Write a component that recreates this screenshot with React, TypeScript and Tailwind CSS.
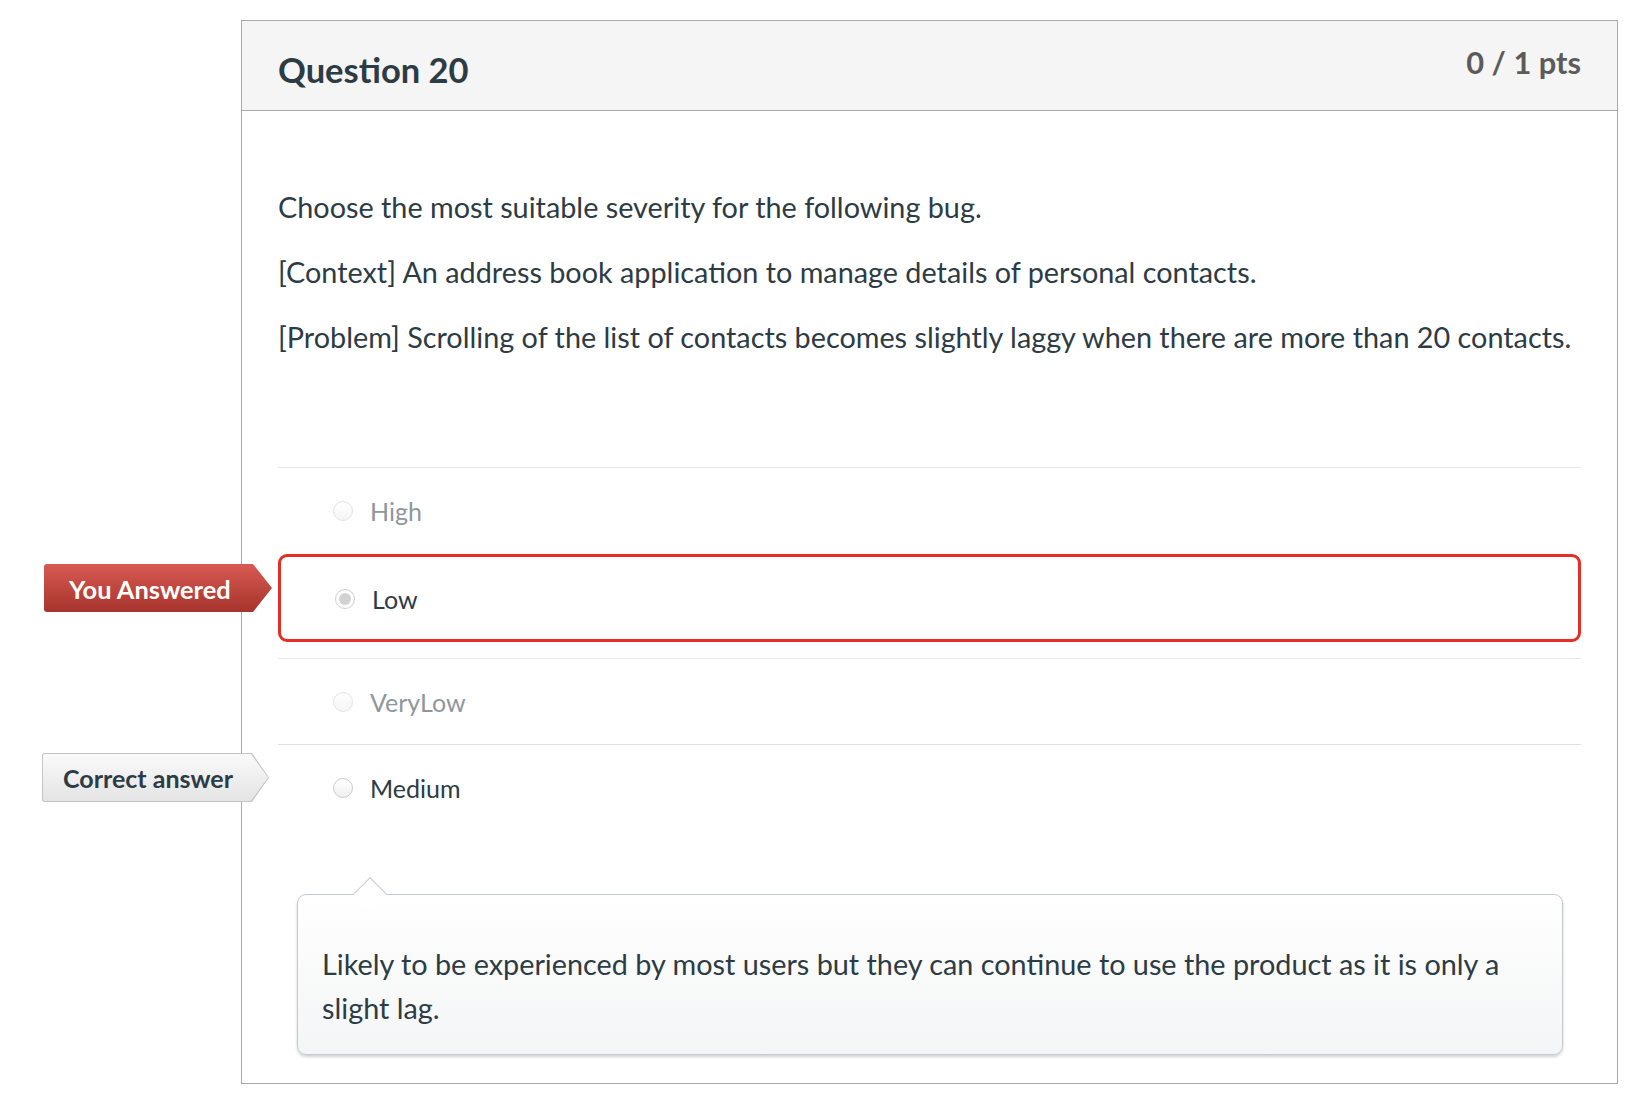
import React from "react";

const Radio = ({ state }: { state: "muted" | "normal" | "selected" }) => {
  if (state === "selected") {
    return (
      <span className="w-[20px] h-[20px] shrink-0 rounded-full border border-[#cfcfcf] bg-white flex items-center justify-center">
        <span className="w-[12px] h-[12px] rounded-full bg-[#d2d2d2]" />
      </span>
    );
  }
  return (
    <span
      className={
        state === "muted"
          ? "w-[20px] h-[20px] shrink-0 rounded-full border border-[#e3e3e3] bg-gradient-to-b from-white to-[#f5f5f5]"
          : "w-[20px] h-[20px] shrink-0 rounded-full border border-[#cbcbcb] bg-gradient-to-b from-white to-[#f0f0f0]"
      }
    />
  );
};

const AnswerRow = ({
  label,
  muted,
}: {
  label: string;
  muted?: boolean;
}) => {
  return (
    <div className="h-[85px] flex items-center gap-[17px] pl-[55px]">
      <Radio state={muted ? "muted" : "normal"} />
      <span
        className={
          muted
            ? "text-[25px] leading-[32px] text-[#8f979d]"
            : "text-[25px] leading-[32px] text-[#2d3b45]"
        }
      >
        {label}
      </span>
    </div>
  );
};

export default function App() {
  return (
    <div className="min-h-screen bg-white pt-[20px] pl-[241px] font-['Lato',sans-serif] text-[#2d3b45]">
      <div className="w-[1377px] border border-[#a8a8a8]">
        {/* header */}
        <div className="h-[90px] bg-[#f5f5f5] border-b border-[#a8a8a8] px-[36px] flex justify-between items-start">
          <h2 className="pt-[29px] text-[34.5px] leading-[40px] font-bold text-[#2d3b45]">
            Question 20
          </h2>
          <div className="pt-[22px] text-[30.8px] leading-[40px] font-bold text-[#5b5b5b]">
            0 / 1 pts
          </div>
        </div>

        {/* body */}
        <div className="px-[36px] pt-[76px] pb-[28px]">
          <div className="flex flex-col gap-[25px] text-[28.8px] leading-[40px]">
            <p>Choose the most suitable severity for the following bug.</p>
            <p>
              [Context] An address book application to manage details of
              personal contacts.
            </p>
            <p>
              [Problem] Scrolling of the list of contacts becomes slightly laggy
              when there are more than 20 contacts.
            </p>
          </div>

          <div className="mt-[110px] border-t border-[#e8e8e8]">
            <div className="h-[86px] flex items-center gap-[17px] pl-[55px]">
              <Radio state="muted" />
              <span className="text-[25px] leading-[32px] text-[#8f979d]">
                High
              </span>
            </div>

            <div className="relative mb-[16px]">
              <div className="absolute left-[-234px] top-[10px] h-[48px] w-[228px] rounded-l-[3px] bg-gradient-to-b from-[#d85a53] to-[#a6342c] [clip-path:polygon(0_0,calc(100%-19px)_0,100%_50%,calc(100%-19px)_100%,0_100%)] flex items-center pl-[25px] pt-[3px]">
                <span className="text-white text-[25.4px] font-bold leading-none">
                  You Answered
                </span>
              </div>
              <div className="h-[88px] border-[3px] border-[#e62e24] rounded-[9px] flex items-center gap-[17px] pl-[54px] pt-[2px]">
                <Radio state="selected" />
                <span className="text-[25px] leading-[32px] text-[#2d3b45]">
                  Low
                </span>
              </div>
            </div>

            <div className="border-t border-[#e8e8e8]">
              <AnswerRow label="VeryLow" muted />
            </div>

            <div className="relative border-t border-[#e0e0e0]">
              <div className="absolute left-[-236px] top-[8px] h-[49px] w-[227px] rounded-l-[3px] bg-[#c4c4c4] [clip-path:polygon(0_0,calc(100%-17px)_0,100%_50%,calc(100%-17px)_100%,0_100%)]">
                <div className="absolute inset-[1px] rounded-l-[2px] bg-gradient-to-b from-[#fafafa] to-[#e4e4e4] [clip-path:polygon(0_0,calc(100%-17px)_0,100%_50%,calc(100%-17px)_100%,0_100%)] flex items-center pl-[20px] pt-[2px]">
                  <span className="text-[#2d3b45] text-[25px] font-bold leading-none">
                    Correct answer
                  </span>
                </div>
              </div>
              <AnswerRow label="Medium" />
            </div>

            {/* comment bubble */}
            <div className="relative mt-[64px] ml-[19px] mr-[18px] rounded-[9px] border border-[#c4cbd0] bg-gradient-to-b from-white to-[#f4f5f6] shadow-[0_2px_3px_rgba(0,0,0,0.18)] pl-[24px] pr-[24px] pt-[47px] pb-[24px]">
              <div className="absolute left-[60px] top-[-13px] w-[24px] h-[24px] rotate-45 bg-white border-l border-t border-[#c4cbd0]" />
              <p className="relative text-[28.8px] leading-[44px] text-[#2d3b45]">
                Likely to be experienced by most users but they can continue to
                use the product as it is only a slight lag.
              </p>
            </div>
          </div>
        </div>
      </div>
    </div>
  );
}
